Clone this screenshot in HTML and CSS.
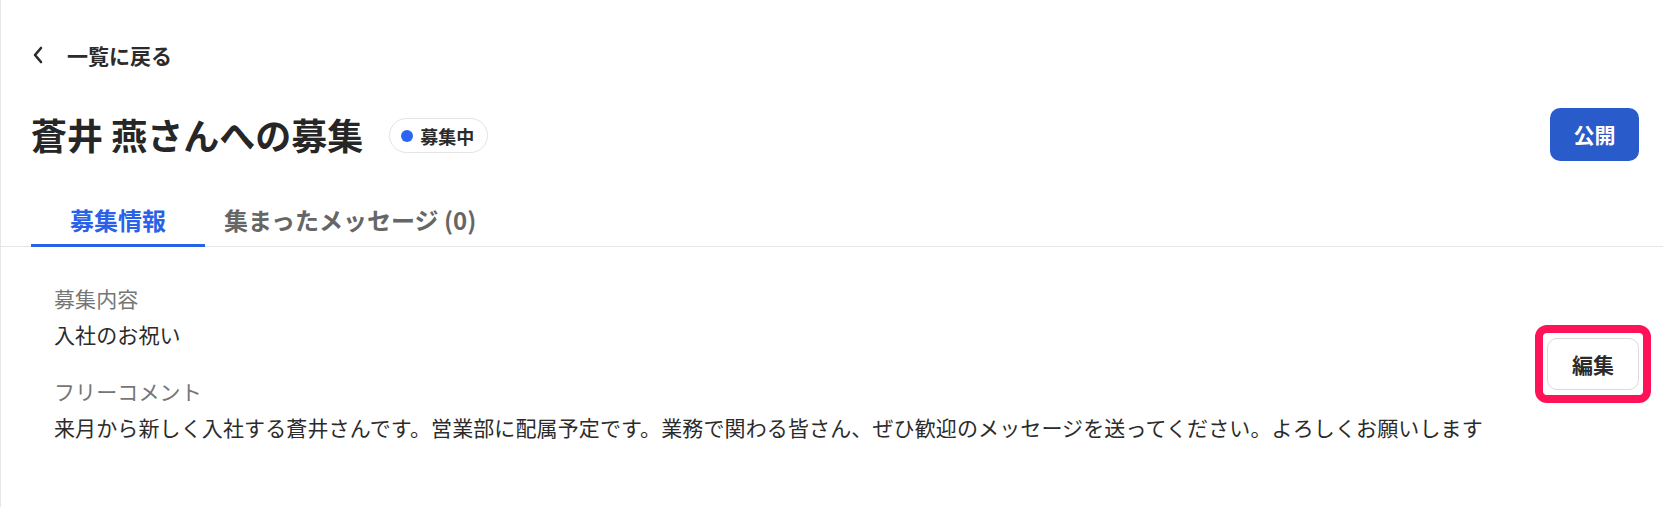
FILE: index.html
```html
<!DOCTYPE html>
<html lang="ja">
<head>
<meta charset="utf-8">
<title>蒼井 燕さんへの募集</title>
<link rel="stylesheet" href="styles.css">
</head>
<body>
<div class="page">
  <header class="header">
    <a class="back" href="#">
      <svg class="back__icon" width="12" height="18" viewBox="0 0 12 18" aria-hidden="true">
        <polyline points="9,2 3,9 9,16" fill="none" stroke="#2b2b2b" stroke-width="2.6" stroke-linecap="round" stroke-linejoin="round"/>
      </svg>
      <span>一覧に戻る</span>
    </a>
    <div class="title-row">
      <div class="title-group">
        <h1 class="title">蒼井 燕さんへの募集</h1>
        <span class="badge"><span class="badge__dot"></span>募集中</span>
      </div>
      <button class="btn btn--primary">公開</button>
    </div>
  </header>
  <nav class="tabs">
    <a class="tab tab--active" href="#">募集情報</a>
    <a class="tab" href="#">集まったメッセージ (0)</a>
  </nav>
  <section class="content">
    <dl class="fields">
      <dt class="field__label">募集内容</dt>
      <dd class="field__value">入社のお祝い</dd>
      <dt class="field__label field__label--spaced">フリーコメント</dt>
      <dd class="field__value">来月から新しく入社する蒼井さんです。営業部に配属予定です。業務で関わる皆さん、ぜひ歓迎のメッセージを送ってください。よろしくお願いします</dd>
    </dl>
    <div class="edit-wrap">
      <button class="btn btn--outline">編集</button>
    </div>
  </section>
</div>
</body>
</html>
```

FILE: styles.css
```css
* { box-sizing: border-box; }

html, body {
  margin: 0;
  padding: 0;
  background: #ffffff;
}

body {
  font-family: "Noto Sans CJK JP", "Noto Sans", sans-serif;
  color: #2b2b2b;
}

.page {
  min-height: 100vh;
  border-left: 1px solid #e6e6e6;
}

.header {
  padding: 40px 24px 0 30px;
}

.back {
  display: inline-flex;
  align-items: center;
  gap: 23px;
  height: 30px;
  font-size: 21px;
  font-weight: 700;
  line-height: 30px;
  color: #2b2b2b;
  text-decoration: none;
  padding-left: 1px;
}

.back__icon { display: block; }

.title-row {
  display: flex;
  align-items: center;
  justify-content: space-between;
  margin-top: 37px;
  height: 54px;
}

.title-group {
  display: flex;
  align-items: center;
  gap: 26px;
}

.title {
  margin: 0;
  font-size: 36px;
  font-weight: 700;
  line-height: 44px;
  color: #262626;
}

.badge {
  display: inline-flex;
  align-items: center;
  gap: 7px;
  height: 35px;
  padding: 0 13px 0 11px;
  margin-top: 3px;
  border: 1px solid #e4e4e4;
  border-radius: 18px;
  font-size: 18px;
  font-weight: 700;
  color: #2b2b2b;
}

.badge__dot {
  width: 12px;
  height: 12px;
  border-radius: 50%;
  background: #2a66f2;
}

.btn {
  font-family: inherit;
  font-size: 21px;
  font-weight: 700;
  cursor: pointer;
  border-radius: 10px;
}

.btn--primary {
  height: 53px;
  padding: 0 23px;
  min-width: 89px;
  border: none;
  background: #2a5bca;
  color: #ffffff;
}

.tabs {
  display: flex;
  margin-top: 41px;
  padding-left: 30px;
  border-bottom: 1px solid #e6e6e6;
}

.tab {
  display: block;
  min-width: 174px;
  padding: 0 19px 6px;
  margin-bottom: -1px;
  font-size: 24px;
  font-weight: 700;
  line-height: 36px;
  text-align: center;
  color: #666666;
  text-decoration: none;
  border-bottom: 3px solid transparent;
}

.tab--active {
  color: #2962e8;
  border-bottom-color: #2962e8;
}

.content {
  display: flex;
  align-items: center;
  justify-content: space-between;
  padding: 35px 24px 0 53px;
}

.fields {
  margin: 0;
}

.field__label {
  font-size: 21px;
  line-height: 32px;
  letter-spacing: 0.12px;
  color: #767676;
}

.field__label--spaced {
  margin-top: 25px;
}

.field__value {
  margin: 4px 0 0;
  font-size: 21px;
  line-height: 32px;
  letter-spacing: 0.12px;
  color: #2b2b2b;
}

.edit-wrap {
  position: relative;
  margin-top: 3px;
}

.edit-wrap::after {
  content: "";
  position: absolute;
  top: -13px;
  bottom: -13px;
  left: -12px;
  right: -12px;
  border: 8px solid #fe1359;
  border-radius: 12px;
  pointer-events: none;
}

.btn--outline {
  display: block;
  width: 92px;
  height: 52px;
  padding: 0;
  border: 1px solid #dadada;
  background: #ffffff;
  color: #2b2b2b;
}
```
